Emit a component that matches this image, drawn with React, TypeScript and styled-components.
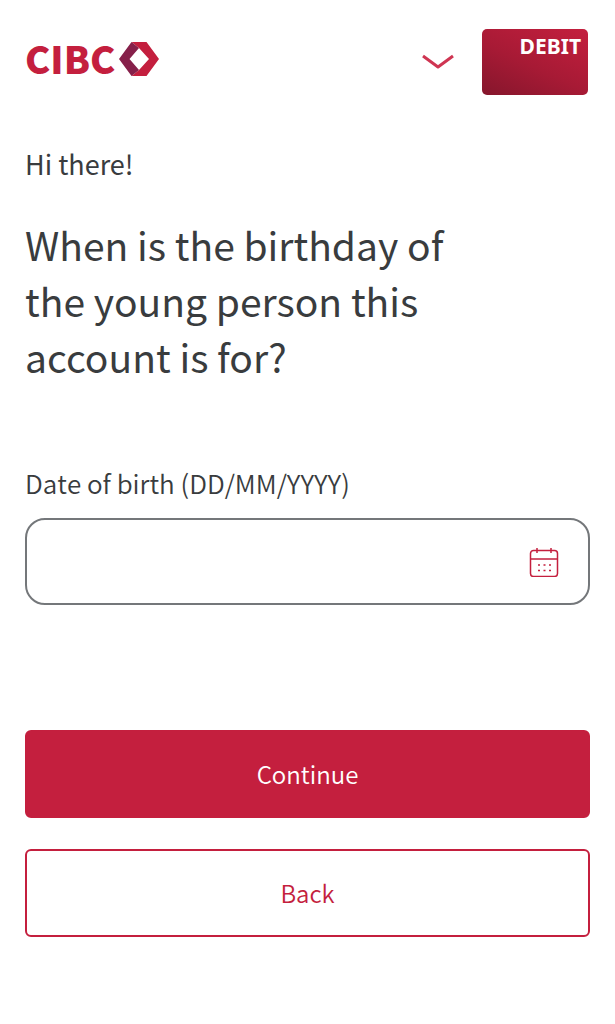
import React, { useId, useState } from "react";
import styled, { createGlobalStyle, css } from "styled-components";

const red = "#c41f3e";
const ink = "#393c3e";

const GlobalStyle = createGlobalStyle`
  *, *::before, *::after { box-sizing: border-box; }
  body {
    margin: 0;
    background: #fff;
    color: ${ink};
    font-family: "Noto Sans CJK SC", "Noto Sans", sans-serif;
  }
`;

const Page = styled.div`
  min-height: 100vh;
  padding: 29px 25px 87px;
`;

const Header = styled.header`
  display: flex;
  align-items: flex-start;
  justify-content: space-between;
  padding-right: 2px;
`;

const Brand = styled.a`
  display: flex;
  align-items: center;
  gap: 4px;
  margin-top: 12px;
  color: ${red};
  text-decoration: none;
`;

const BrandName = styled.span`
  padding-bottom: 2px;
  font-size: 38px;
  line-height: 34px;
  font-weight: 900;
`;

const AccountMenu = styled.button`
  display: flex;
  align-items: center;
  gap: 28px;
  padding: 0;
  border: 0;
  background: none;
  cursor: pointer;
`;

const DebitCard = styled.span`
  width: 106px;
  height: 66px;
  padding: 5px 7px;
  border-radius: 5px;
  background: linear-gradient(25deg, #85162c 0%, #a71a35 45%, #c41f3e 100%);
  color: #fff;
  font: 700 21px/24px "Noto Sans", sans-serif;
  text-align: right;
`;

const Greeting = styled.p`
  margin: 49px 0 0;
  font-size: 27px;
  line-height: 40px;
`;

const Question = styled.h1`
  max-width: 440px;
  margin: 32px 0 0;
  font-size: 39px;
  line-height: 56px;
  font-weight: 400;
`;

const Form = styled.form`
  display: flex;
  flex-direction: column;
`;

const Label = styled.label`
  margin-top: 81px;
  font-size: 26px;
  line-height: 36px;
  font-weight: 350;
  font-kerning: none;
`;

const DateField = styled.div`
  display: flex;
  align-items: center;
  height: 87px;
  margin-top: 17px;
  padding-right: 29px;
  border: 2px solid #74777a;
  border-radius: 20px;
`;

const DateInput = styled.input`
  flex: 1;
  min-width: 0;
  height: 100%;
  padding: 0 24px;
  border: 0;
  outline: 0;
  background: none;
  color: inherit;
  font: inherit;
  font-size: 24px;
`;

const CalendarButton = styled.button`
  display: flex;
  padding: 0;
  border: 0;
  background: none;
  cursor: pointer;
`;

const Actions = styled.div`
  display: flex;
  flex-direction: column;
  gap: 31px;
  margin-top: 125px;
`;

const Button = styled.button<{ $primary?: boolean }>`
  height: 88px;
  padding: 0 16px;
  border: 2px solid ${red};
  border-radius: 6px;
  font-family: inherit;
  font-size: 24px;
  line-height: 36px;
  font-weight: 350;
  cursor: pointer;
  ${({ $primary }) =>
    $primary
      ? css`background: ${red}; color: #fff;`
      : css`background: #fff; color: ${red};`}
`;

const BrandMark = () => (
  <svg width="40" height="34" viewBox="0 0 40 34" aria-hidden="true">
    <path fill={red} d="M12.5 0H27.5L40 17L27.5 34H12.5L20 28L30 17L20 6Z" />
    <path fill="#86204a" d="M12.5 0L0 17L12.5 34L20 28L10.5 17L20 6Z" />
  </svg>
);

const Chevron = () => (
  <svg width="32" height="17" viewBox="0 0 32 17" fill="none" stroke="#cf3552" strokeWidth="3" strokeLinejoin="round" aria-hidden="true">
    <path d="M1 2L16 13L31 2" />
  </svg>
);

const CalendarIcon = () => (
  <svg width="30" height="30" viewBox="0 0 30 30" fill="none" stroke={red} strokeWidth="1.5" aria-hidden="true">
    <rect x="1.5" y="3.5" width="27" height="26" rx="3" />
    <path d="M1.5 12H28.5M8 1V6M22 1V6" />
    <path strokeDasharray="2 3.5" d="M9 18H22M9 23.5H22" />
  </svg>
);

export default function App() {
  const dateId = useId();
  const [date, setDate] = useState("");
  return (
    <>
      <GlobalStyle />
      <Page>
        <Header>
          <Brand href="#">
            <BrandName>CIBC</BrandName>
            <BrandMark />
          </Brand>
          <AccountMenu type="button">
            <Chevron />
            <DebitCard>DEBIT</DebitCard>
          </AccountMenu>
        </Header>
        <main>
          <Greeting>Hi there!</Greeting>
          <Question>When is the birthday of the young person this account is for?</Question>
          <Form onSubmit={(e) => e.preventDefault()}>
            <Label htmlFor={dateId}>Date of birth (DD/MM/YYYY)</Label>
            <DateField>
              <DateInput id={dateId} inputMode="numeric" value={date} onChange={(e) => setDate(e.target.value)} />
              <CalendarButton type="button" aria-label="Choose a date">
                <CalendarIcon />
              </CalendarButton>
            </DateField>
            <Actions>
              <Button $primary type="submit">Continue</Button>
              <Button type="button">Back</Button>
            </Actions>
          </Form>
        </main>
      </Page>
    </>
  );
}
